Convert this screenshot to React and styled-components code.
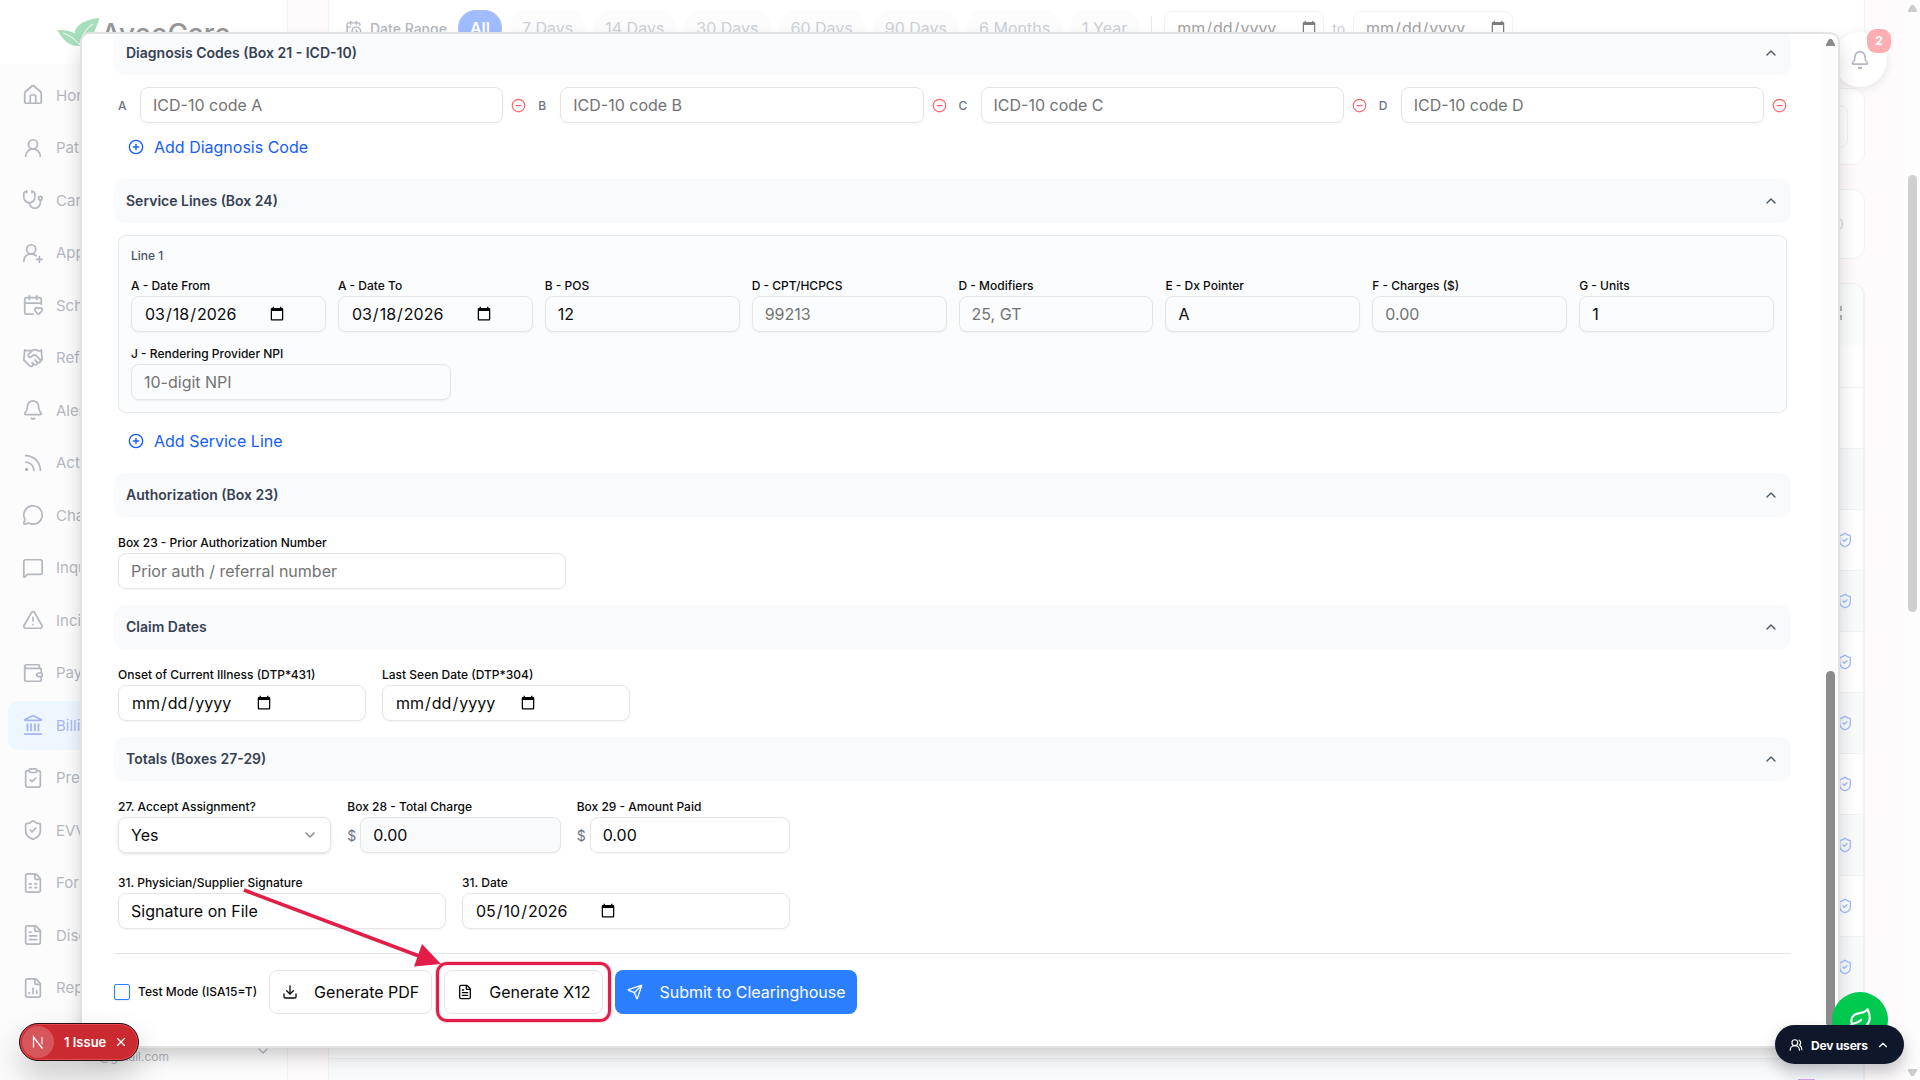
import styled, { createGlobalStyle } from 'styled-components';
import {
  House, UserRound, Stethoscope, UserRoundPlus, CalendarHeart, Handshake, Bell, Rss, MessageCircle,
  MessageSquare, TriangleAlert, Wallet, Landmark, ClipboardCheck, ShieldCheck, FileSpreadsheet,
  FileText, FileChartColumn, CalendarClock, ChevronUp, ChevronDown, CircleMinus, CirclePlus,
  Download, Send, UsersRound, Leaf, X,
} from 'lucide-react';

const NAV = [
  ['Home', House],
  ['Patients', UserRound],
  ['Care', Stethoscope],
  ['Apply', UserRoundPlus],
  ['Schedule', CalendarHeart],
  ['Referrals', Handshake],
  ['Alerts', Bell],
  ['Activity', Rss],
  ['Chat', MessageCircle],
  ['Inquiries', MessageSquare],
  ['Incidents', TriangleAlert],
  ['Payroll', Wallet],
  ['Billing', Landmark],
  ['Prebilling', ClipboardCheck],
  ['EVV', ShieldCheck],
  ['Forms', FileSpreadsheet],
  ['Disclosures', FileText],
  ['Reports', FileChartColumn],
];

const RANGES = ['7 Days', '14 Days', '30 Days', '60 Days', '90 Days', '6 Months', '1 Year'];

function App() {
  return (
    <Page>
      <GlobalStyle />
      <Backdrop>
        <Sidebar>
          <Brand>
            <LeafLogo />
            <BrandName>AveeCare</BrandName>
          </Brand>
          <NavList>
            {NAV.map(([label, Icon]) => (
              <NavItem key={label} $active={label === 'Billing'}>
                <Icon size={22} strokeWidth={1.9} />
                {label}
              </NavItem>
            ))}
          </NavList>
          <Account>
            <span>@gmail.com</span>
            <ChevronDown size={16} />
          </Account>
        </Sidebar>
        <Main>
          <FilterCard>
            <CalendarClock size={17} />
            <RangeLabel>Date Range</RangeLabel>
            <Pill $active>All</Pill>
            {RANGES.map((range) => (
              <Pill key={range}>{range}</Pill>
            ))}
            <Divider />
            <FilterDate type="date" />
            <To>to</To>
            <FilterDate type="date" />
          </FilterCard>
          <StatCard $height={77}>
            <StatInner />
          </StatCard>
          <StatCard $height={70}>
            <StatDot />
          </StatCard>
          <ClaimTable>
            <HeadRow>
              <HeadMark />
            </HeadRow>
            <TableRow $height={43} />
            {Array.from({ length: 11 }, (_, i) => (
              <TableRow key={i} $height={61} $striped={i % 2 === 1}>
                {i > 1 && i < 10 && <ShieldCheck size={16} />}
              </TableRow>
            ))}
            <LastRow>
              <StatusBadge />
            </LastRow>
          </ClaimTable>
        </Main>
        <PageScroll>
          <Arrow $faded />
          <PageThumb />
          <Arrow $faded $down />
        </PageScroll>
        <BellButton>
          <Bell size={20} />
          <Count>2</Count>
        </BellButton>
      </Backdrop>

      <Dialog>
        <Form>
          {/* Diagnosis */}
          <SectionHeader title="Diagnosis Codes (Box 21 - ICD-10)" />
          <CodeGrid>
            {['A', 'B', 'C', 'D'].map((letter) => (
              <CodeCell key={letter}>
                <CodeLetter>{letter}</CodeLetter>
                <Input placeholder={`ICD-10 code ${letter}`} />
                <CircleMinus size={15} color="#ff6467" />
              </CodeCell>
            ))}
          </CodeGrid>
          <AddButton $gap={8}>
            <CirclePlus size={16} />
            Add Diagnosis Code
          </AddButton>

          {/* Service lines */}
          <SectionHeader title="Service Lines (Box 24)" />
          <LineCard>
            <LineTitle>Line 1</LineTitle>
            <LineGrid>
              <Field label="A - Date From"><Input type="date" defaultValue="2026-03-18" /></Field>
              <Field label="A - Date To"><Input type="date" defaultValue="2026-03-18" /></Field>
              <Field label="B - POS"><Input defaultValue="12" /></Field>
              <Field label="D - CPT/HCPCS"><Input placeholder="99213" /></Field>
              <Field label="D - Modifiers"><Input placeholder="25, GT" /></Field>
              <Field label="E - Dx Pointer"><Input defaultValue="A" /></Field>
              <Field label="F - Charges ($)"><Input placeholder="0.00" /></Field>
              <Field label="G - Units"><Input defaultValue="1" /></Field>
            </LineGrid>
            <Provider>
              <Field label="J - Rendering Provider NPI"><Input placeholder="10-digit NPI" /></Field>
            </Provider>
          </LineCard>
          <AddButton $gap={12}>
            <CirclePlus size={16} />
            Add Service Line
          </AddButton>

          {/* Authorization */}
          <SectionHeader title="Authorization (Box 23)" />
          <FieldGrid $cols={1} $width={448}>
            <Field label="Box 23 - Prior Authorization Number">
              <Input placeholder="Prior auth / referral number" />
            </Field>
          </FieldGrid>

          {/* Claim dates */}
          <SectionHeader title="Claim Dates" />
          <FieldGrid $cols={2} $width={512}>
            <Field label="Onset of Current Illness (DTP*431)"><Input type="date" /></Field>
            <Field label="Last Seen Date (DTP*304)"><Input type="date" /></Field>
          </FieldGrid>

          {/* Totals */}
          <SectionHeader title="Totals (Boxes 27-29)" />
          <FieldGrid $cols={3} $width={672}>
            <Field label="27. Accept Assignment?">
              <Select>
                Yes
                <ChevronDown size={16} />
              </Select>
            </Field>
            <Field label="Box 28 - Total Charge">
              <Money>$<Input $muted defaultValue="0.00" /></Money>
            </Field>
            <Field label="Box 29 - Amount Paid">
              <Money>$<Input defaultValue="0.00" /></Money>
            </Field>
          </FieldGrid>
          <FieldGrid $cols={2} $width={672} $last>
            <Field label="31. Physician/Supplier Signature"><Input defaultValue="Signature on File" /></Field>
            <Field label="31. Date"><Input type="date" defaultValue="2026-05-10" /></Field>
          </FieldGrid>

          {/* Actions */}
          <Actions>
            <Checkbox />
            <TestMode>Test Mode (ISA15=T)</TestMode>
            <Button>
              <Download size={16} />
              Generate PDF
            </Button>
            <Highlight>
              <Button>
                <FileText size={16} />
                Generate X12
              </Button>
              <Pointer />
            </Highlight>
            <Button $primary>
              <Send size={16} />
              Submit to Clearinghouse
            </Button>
          </Actions>
        </Form>
        <DialogScroll>
          <Arrow />
          <DialogThumb />
        </DialogScroll>
      </Dialog>

      <HelpButton>
        <Leaf size={26} />
      </HelpButton>
      <DevUsers>
        <UsersRound size={14} />
        <span>Dev users</span>
        <ChevronUp size={14} />
      </DevUsers>
      <IssueToast>
        <NextMark>
          <svg width="14" height="14" viewBox="0 0 14 14" fill="none" stroke="#fff" strokeWidth="1.3">
            <path d="M2.5 12.5V2L11.5 13.5" />
            <path d="M11 2V9.5" strokeOpacity="0.8" />
          </svg>
        </NextMark>
        1 Issue
        <X size={14} />
      </IssueToast>
    </Page>
  );
}

function SectionHeader({ title }) {
  return (
    <SectionBar>
      {title}
      <ChevronUp size={16} color="#4a5565" />
    </SectionBar>
  );
}

function Field({ label, children }) {
  return (
    <FieldBox>
      <Label>{label}</Label>
      {children}
    </FieldBox>
  );
}

function LeafLogo() {
  return (
    <svg width="43" height="28" viewBox="0 0 43 28">
      <path d="M42.5 0C30 1 20 6 18 13C17 18 20 22 22 27C34 23 38 14 42.5 0Z" fill="#51bf7f" />
      <path d="M0 12C9 12 17 13 20 18C22 21 23 24 23 28C10 28 7 22 0 12Z" fill="#51bf7f" />
      <path d="M36 6C31 9 25 16 22.5 27C18 21 12 17 6 15" fill="none" stroke="#fff" strokeWidth="1" />
    </svg>
  );
}

function Pointer() {
  return (
    <PointerSvg width="200" height="86" viewBox="0 0 200 86">
      <path d="M1 7L176 73" stroke="#e11d48" strokeWidth="3.5" />
      <path d="M179 61L198 81L171 83.5Z" fill="#e11d48" />
    </PointerSvg>
  );
}

const GlobalStyle = createGlobalStyle`
  * {
    box-sizing: border-box;
  }
  body {
    margin: 0;
    overflow: hidden;
    font-family: Inter, 'Liberation Sans', sans-serif;
    font-size: 16px;
    color: #0a0a0a;
  }
  svg {
    flex-shrink: 0;
  }
`;

const Page = styled.div`
  position: relative;
  width: 1920px;
  height: 1080px;
  overflow: hidden;
  background: #fff;
`;

/* everything behind the dialog is washed out */
const Backdrop = styled.div`
  display: flex;
  height: 1080px;
  opacity: 0.5;
  background: #fff9fa;
`;

const Sidebar = styled.aside`
  width: 288px;
  flex-shrink: 0;
  display: flex;
  flex-direction: column;
  border-right: 1px solid #e5e7eb;
  background: #fafafa;
`;

const Brand = styled.div`
  display: flex;
  gap: 1px;
  height: 64px;
  padding: 18px 0 0 57px;
  background: #fff;
`;

const BrandName = styled.div`
  padding-top: 1px;
  font-size: 28px;
  line-height: 30px;
  font-weight: 500;
  color: #2f2f33;
`;

const NavList = styled.nav`
  display: flex;
  flex-direction: column;
  gap: 4px;
  padding: 7px 8px 0;
`;

const NavItem = styled.div`
  display: flex;
  align-items: center;
  gap: 12px;
  height: 48.5px;
  padding-left: 14px;
  border-radius: 10px;
  font-size: 15px;
  color: ${(p) => (p.$active ? '#4f6bea' : '#6a7282')};
  background: ${(p) => (p.$active ? '#dfeeff' : 'transparent')};
`;

const Account = styled.div`
  display: flex;
  justify-content: space-between;
  padding: 31px 16px 0 99px;
  font-size: 12px;
  color: #6a7282;

  span {
    margin-top: 6px;
  }
`;

const Main = styled.main`
  flex: 1;
  padding: 0 40px;
`;

const Card = styled.div`
  display: flex;
  border: 1px solid #e5e7eb;
  background: #fff;
`;

const FilterCard = styled(Card)`
  align-items: center;
  gap: 8px;
  height: 64px;
  padding: 0 0 7px 16px;
  border-top: 0;
  color: #6a7282;
`;

const RangeLabel = styled.span`
  font-size: 14px;
  font-weight: 500;
  margin-right: 3px;
`;

const Pill = styled.span`
  padding: 0 12px;
  line-height: 36px;
  border-radius: 18px;
  color: ${(p) => (p.$active ? '#fff' : '#99a1af')};
  font-weight: ${(p) => (p.$active ? 600 : 400)};
  background: ${(p) => (p.$active ? '#447cff' : '#f8faf9')};
`;

const Divider = styled.span`
  width: 1px;
  height: 24px;
  margin: 0 4px;
  background: #d1d5dc;
`;

const FilterDate = styled.input`
  width: 160px;
  height: 34px;
  padding: 0 4px 0 11px;
  border: 1px solid #e5e7eb;
  border-radius: 8px;
  font: inherit;
  color: #444;
  background: #fff;
`;

const To = styled.span`
  font-size: 14px;
  color: #99a1af;
`;

const StatCard = styled(Card)`
  justify-content: flex-end;
  height: ${(p) => p.$height}px;
  margin-top: 24px;
  border-radius: 12px;
`;

const StatInner = styled.div`
  width: 160px;
  height: 43px;
  margin: 16px;
  border: 1px solid #e5e7eb;
  border-radius: 8px;
`;

const StatDot = styled.div`
  width: 14px;
  height: 14px;
  margin: 27px 21px;
  border: 1px solid #99a1af;
  border-radius: 50%;
`;

const ClaimTable = styled(Card)`
  flex-direction: column;
  margin-top: 24px;
  border-right-width: 2px;
  border-radius: 12px 12px 0 0;
`;

const HeadRow = styled.div`
  display: flex;
  justify-content: flex-end;
  height: 61px;
  border-radius: 12px 12px 0 0;
  background: #f9fafb;
`;

const HeadMark = styled.div`
  width: 4px;
  height: 14px;
  margin: 22px 21px;
  border-top: 5px solid #6a7282;
  border-bottom: 5px solid #6a7282;
`;

const TableRow = styled.div`
  display: flex;
  align-items: center;
  justify-content: flex-end;
  height: ${(p) => p.$height}px;
  padding-right: 10px;
  border-bottom: 1px solid #e5e7eb;
  color: #447cff;
  background: ${(p) => (p.$striped ? '#f3f6fa' : '#fff')};
`;

const LastRow = styled.div`
  display: flex;
  justify-content: flex-end;
  height: 21px;
  padding: 20px 48px 0 0;
  background: #f3f6fa;
`;

const StatusBadge = styled.span`
  width: 17px;
  height: 1px;
  background: #9a4fe0;
`;

const PageScroll = styled.div`
  display: flex;
  flex-direction: column;
  align-items: center;
  width: 15px;
  padding: 5px 0 4px;
  background: #fcfcfc;
`;

const Arrow = styled.div`
  width: 9px;
  height: 7px;
  background: ${(p) => (p.$faded ? '#9d9d9d' : '#8b8b8b')};
  clip-path: polygon(35% 0, 65% 0, 100% 75%, 100% 100%, 0 100%, 0 75%);
  transform: ${(p) => (p.$down ? 'rotate(180deg)' : 'none')};
`;

const PageThumb = styled.div`
  width: 9px;
  height: 437px;
  margin: 163px 0 auto;
  border-radius: 5px;
  background: #a0a0a0;
`;

const BellButton = styled.div`
  position: absolute;
  left: 1833px;
  top: 32px;
  width: 54px;
  height: 55px;
  display: flex;
  align-items: center;
  justify-content: center;
  border-radius: 50%;
  background: #fff;
  color: #6a7282;
  box-shadow: 0 2px 8px rgba(0, 0, 0, 0.2);
`;

const Count = styled.span`
  position: absolute;
  right: -4px;
  top: -3px;
  width: 24px;
  height: 24px;
  border-radius: 9px;
  text-align: center;
  font-size: 12px;
  line-height: 24px;
  font-weight: 700;
  color: #fff;
  background: #fb5f68;
`;

const Dialog = styled.div`
  position: absolute;
  left: 80px;
  top: 32px;
  width: 1760px;
  height: 1016px;
  display: flex;
  overflow: hidden;
  border: 2px solid #e2e2e3;
  border-radius: 10px;
  background: #fff;
  box-shadow: 0 10px 20px -3px rgba(0, 0, 0, 0.22);
`;

const Form = styled.div`
  flex: 1;
  margin-top: -3px;
  padding: 0 32px;
`;

const SectionBar = styled.div`
  display: flex;
  align-items: center;
  justify-content: space-between;
  height: 44px;
  padding: 0 12px;
  border-radius: 10px;
  font-size: 14px;
  line-height: 20px;
  font-weight: 600;
  color: #364153;
  background: #f9fafb;
`;

const CodeGrid = styled.div`
  display: grid;
  grid-template-columns: repeat(4, 1fr);
  gap: 12px;
  padding: 12px 4px 0;
`;

const CodeCell = styled.div`
  display: flex;
  align-items: center;
  gap: 8px;
`;

const CodeLetter = styled.span`
  width: 14px;
  flex-shrink: 0;
  font-size: 12px;
  font-weight: 500;
  color: #6a7282;
`;

const Input = styled.input`
  flex: 1;
  display: block;
  width: 100%;
  min-width: 0;
  height: 36px;
  padding: 0 12px;
  border: 1px solid #e5e5e5;
  border-radius: 8px;
  font: inherit;
  color: #0a0a0a;
  background: ${(p) => (p.$muted ? '#f9fafb' : 'transparent')};
  box-shadow: 0 1px 2px rgba(0, 0, 0, 0.05);

  &::placeholder {
    color: #737373;
  }
  &::-webkit-datetime-edit {
    flex: none;
  }
`;

const AddButton = styled.div`
  display: flex;
  align-items: center;
  gap: 10px;
  height: 32px;
  margin: ${(p) => p.$gap}px 0 16px;
  padding-left: 14px;
  color: #155dfc;
`;

const LineCard = styled.div`
  margin: 12px 4px 0;
  height: 178px;
  padding: 12px;
  border: 1px solid #e5e7eb;
  border-radius: 8px;
  background: #fbfcfe;
`;

const LineTitle = styled.div`
  font-size: 12px;
  line-height: 16px;
  font-weight: 500;
  color: #4a5565;
  margin-bottom: 12px;
`;

const LineGrid = styled.div`
  display: grid;
  grid-template-columns: repeat(8, 1fr);
  gap: 12px;
`;

const Provider = styled.div`
  width: 320px;
  margin-top: 12px;
`;

const FieldBox = styled.div`
  min-width: 0;
`;

const Label = styled.label`
  display: block;
  height: 20px;
  font-size: 12px;
  line-height: 20px;
  font-weight: 500;
`;

const FieldGrid = styled.div`
  display: grid;
  grid-template-columns: repeat(${(p) => p.$cols}, 1fr);
  gap: 16px;
  width: ${(p) => p.$width}px;
  margin: ${(p) => (p.$last ? '20px 4px 0' : '16px 4px')};
`;

const Select = styled.div`
  display: flex;
  align-items: center;
  justify-content: space-between;
  height: 36px;
  padding: 0 12px;
  border: 1px solid #e5e5e5;
  border-radius: 8px;
  box-shadow: 0 1px 3px rgba(0, 0, 0, 0.14);

  svg {
    color: #858585;
  }
`;

const Money = styled.div`
  display: flex;
  align-items: center;
  gap: 4px;
  color: #6a7282;
  font-size: 14px;

  input {
    font-size: 16px;
  }
`;

const Actions = styled.div`
  display: flex;
  align-items: center;
  gap: 12px;
  margin-top: 24px;
  padding-top: 16px;
  border-top: 1px solid #e5e5e5;
`;

const Checkbox = styled.span`
  width: 16px;
  height: 16px;
  border: 1px solid #2b7fff;
  border-radius: 2px;
  box-shadow: 0 1px 2px rgba(0, 0, 0, 0.08);
`;

const TestMode = styled.span`
  margin-left: -4px;
  font-size: 12px;
  line-height: 16px;
  font-weight: 500;
`;

const Button = styled.div`
  display: flex;
  align-items: center;
  gap: 16px;
  height: 44px;
  padding: 0 12px;
  border: ${(p) => (p.$primary ? '0' : '1px solid #e5e5e5')};
  border-radius: 8px;
  color: ${(p) => (p.$primary ? '#fff' : '#0a0a0a')};
  background: ${(p) => (p.$primary ? '#2b7fff' : '#fff')};
  white-space: nowrap;
`;

const Highlight = styled.div`
  position: relative;

  &::after {
    content: '';
    position: absolute;
    inset: -8px;
    border: 3px solid #e11d48;
    border-radius: 11px;
    box-shadow: 0 0 0 1px rgba(225, 29, 72, 0.2), inset 0 0 0 1px rgba(225, 29, 72, 0.1);
  }
`;

const PointerSvg = styled.svg`
  position: absolute;
  left: -201px;
  top: -87px;
  z-index: 1;
`;

const DialogScroll = styled.div`
  display: flex;
  flex-direction: column;
  align-items: center;
  width: 15px;
  padding-top: 5px;
  background: #fcfcfc;
`;

const DialogThumb = styled.div`
  width: 9px;
  height: 356px;
  margin-top: 625px;
  border-radius: 5px;
  background: #8b8b8b;
`;

const HelpButton = styled.div`
  position: absolute;
  left: 1832px;
  top: 992px;
  width: 56px;
  height: 56px;
  display: flex;
  align-items: center;
  justify-content: center;
  border-radius: 50%;
  color: #fff;
  background: #00c950;
`;

const DevUsers = styled.div`
  position: absolute;
  left: 1775px;
  top: 1025px;
  width: 129px;
  height: 39px;
  display: flex;
  align-items: center;
  gap: 8px;
  padding-left: 14px;
  border-radius: 20px;
  font-size: 12px;
  font-weight: 700;
  letter-spacing: -0.2px;
  color: #fff;
  background: #0f172b;
  box-shadow: 0 8px 16px rgba(15, 23, 43, 0.25);

  span {
    padding-top: 1px;
  }
`;

const IssueToast = styled.div`
  position: absolute;
  left: 19px;
  top: 1023px;
  width: 120px;
  height: 38px;
  display: flex;
  align-items: center;
  gap: 8px;
  padding-left: 2px;
  border: 1px solid #1f1215;
  border-radius: 19px;
  font-size: 13px;
  line-height: 16px;
  font-weight: 600;
  color: #fff;
  background: #ca2a30;
  box-shadow: inset 0 0 0 1px #e5484d, 0 16px 32px rgba(0, 0, 0, 0.2);
`;

const NextMark = styled.span`
  width: 32px;
  height: 32px;
  margin-right: 2px;
  display: flex;
  align-items: center;
  justify-content: center;
  border-radius: 50%;
  background: #d6565b;
`;

export default App;
